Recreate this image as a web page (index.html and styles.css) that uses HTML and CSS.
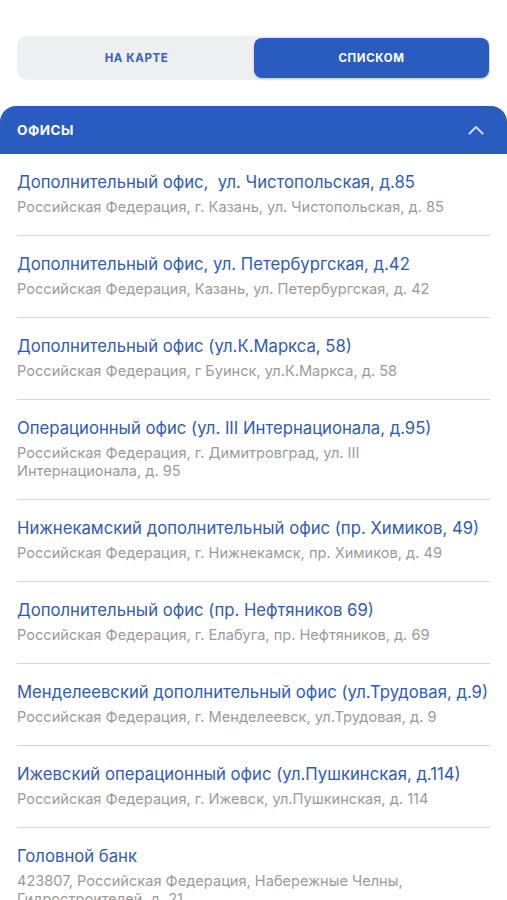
FILE: index.html
```html
<!DOCTYPE html>
<html lang="ru">
<head>
    <meta charset="UTF-8" />
    <meta name="viewport" content="width=device-width, initial-scale=1" />
    <title>Офисы</title>
    <link rel="stylesheet" href="styles.css">
</head>
<body>

    <div class="tabs">
        <button class="tab">НА КАРТЕ</button>
        <button class="tab active">СПИСКОМ</button>
    </div>

    <div class="section">
        <div class="section-head">
            <span>ОФИСЫ</span>
            <svg width="16" height="10" viewBox="0 0 16 10" aria-hidden="true">
                <path d="M1.5 8.5 L8 2 L14.5 8.5" fill="none" stroke="#cdd7ef" stroke-width="2" stroke-linecap="round" stroke-linejoin="round"/>
            </svg>
        </div>

        <ul class="offices">
            <li>
                <a class="office-name">Дополнительный офис,&nbsp; ул. Чистопольская, д.85</a>
                <p class="office-addr">Российская Федерация, г. Казань, ул. Чистопольская, д. 85</p>
            </li>
            <li>
                <a class="office-name">Дополнительный офис, ул. Петербургская, д.42</a>
                <p class="office-addr">Российская Федерация, Казань, ул. Петербургская, д. 42</p>
            </li>
            <li>
                <a class="office-name">Дополнительный офис (ул.К.Маркса, 58)</a>
                <p class="office-addr">Российская Федерация, г Буинск, ул.К.Маркса, д. 58</p>
            </li>
            <li>
                <a class="office-name">Операционный офис (ул. III Интернационала, д.95)</a>
                <p class="office-addr">Российская Федерация, г. Димитровград, ул. III<br>Интернационала, д. 95</p>
            </li>
            <li>
                <a class="office-name">Нижнекамский дополнительный офис (пр. Химиков, 49)</a>
                <p class="office-addr">Российская Федерация, г. Нижнекамск, пр. Химиков, д. 49</p>
            </li>
            <li>
                <a class="office-name">Дополнительный офис (пр. Нефтяников 69)</a>
                <p class="office-addr">Российская Федерация, г. Елабуга, пр. Нефтяников, д. 69</p>
            </li>
            <li>
                <a class="office-name">Менделеевский дополнительный офис (ул.Трудовая, д.9)</a>
                <p class="office-addr">Российская Федерация, г. Менделеевск, ул.Трудовая, д. 9</p>
            </li>
            <li>
                <a class="office-name">Ижевский операционный офис (ул.Пушкинская, д.114)</a>
                <p class="office-addr">Российская Федерация, г. Ижевск, ул.Пушкинская, д. 114</p>
            </li>
            <li>
                <a class="office-name">Головной банк</a>
                <p class="office-addr">423807, Российская Федерация, Набережные Челны,<br>Гидростроителей, д. 21</p>
            </li>
        </ul>
    </div>

</body>
</html>
```

FILE: styles.css
```css
body {
    font-family: Inter, "Noto Sans", sans-serif;
    background: #fff;
    color: #333;
    margin: 0;
    padding: 36px 0 0;
}
.tabs {
    display: flex;
    margin: 0 17px;
    padding: 2px 1px 2px 2px;
    height: 40px;
    background: #eeeff1;
    border-radius: 10px;
}
.tab {
    flex: 1;
    border: none;
    background: none;
    font-family: inherit;
    font-size: 11.5px;
    font-weight: 700;
    letter-spacing: 0.6px;
    color: #3a60b8;
    border-radius: 8px;
    cursor: pointer;
}
.tab.active {
    background: #2a5bbf;
    color: #fff;
    box-shadow: 0 1px 3px rgba(0,0,0,0.18);
}
.section {
    margin-top: 26px;
}
.section-head {
    display: flex;
    justify-content: space-between;
    align-items: center;
    height: 48px;
    padding: 0 23px 0 17px;
    background: #2a5bbf;
    color: #fff;
    border-radius: 16px 16px 0 0;
    font-size: 13.5px;
    font-weight: 700;
    letter-spacing: 0.5px;
}
.offices {
    list-style: none;
    margin: 0 17px;
    padding: 0;
}
.offices li {
    padding: 17px 0 19px;
    border-bottom: 1px solid #d6d6d6;
}
.office-name {
    display: block;
    font-size: 16.7px;
    line-height: 22px;
    color: #2f5bb5;
    white-space: nowrap;
}
.office-addr {
    margin: 5px 0 0;
    font-size: 14.6px;
    line-height: 18px;
    color: #9b9b9b;
}
```
